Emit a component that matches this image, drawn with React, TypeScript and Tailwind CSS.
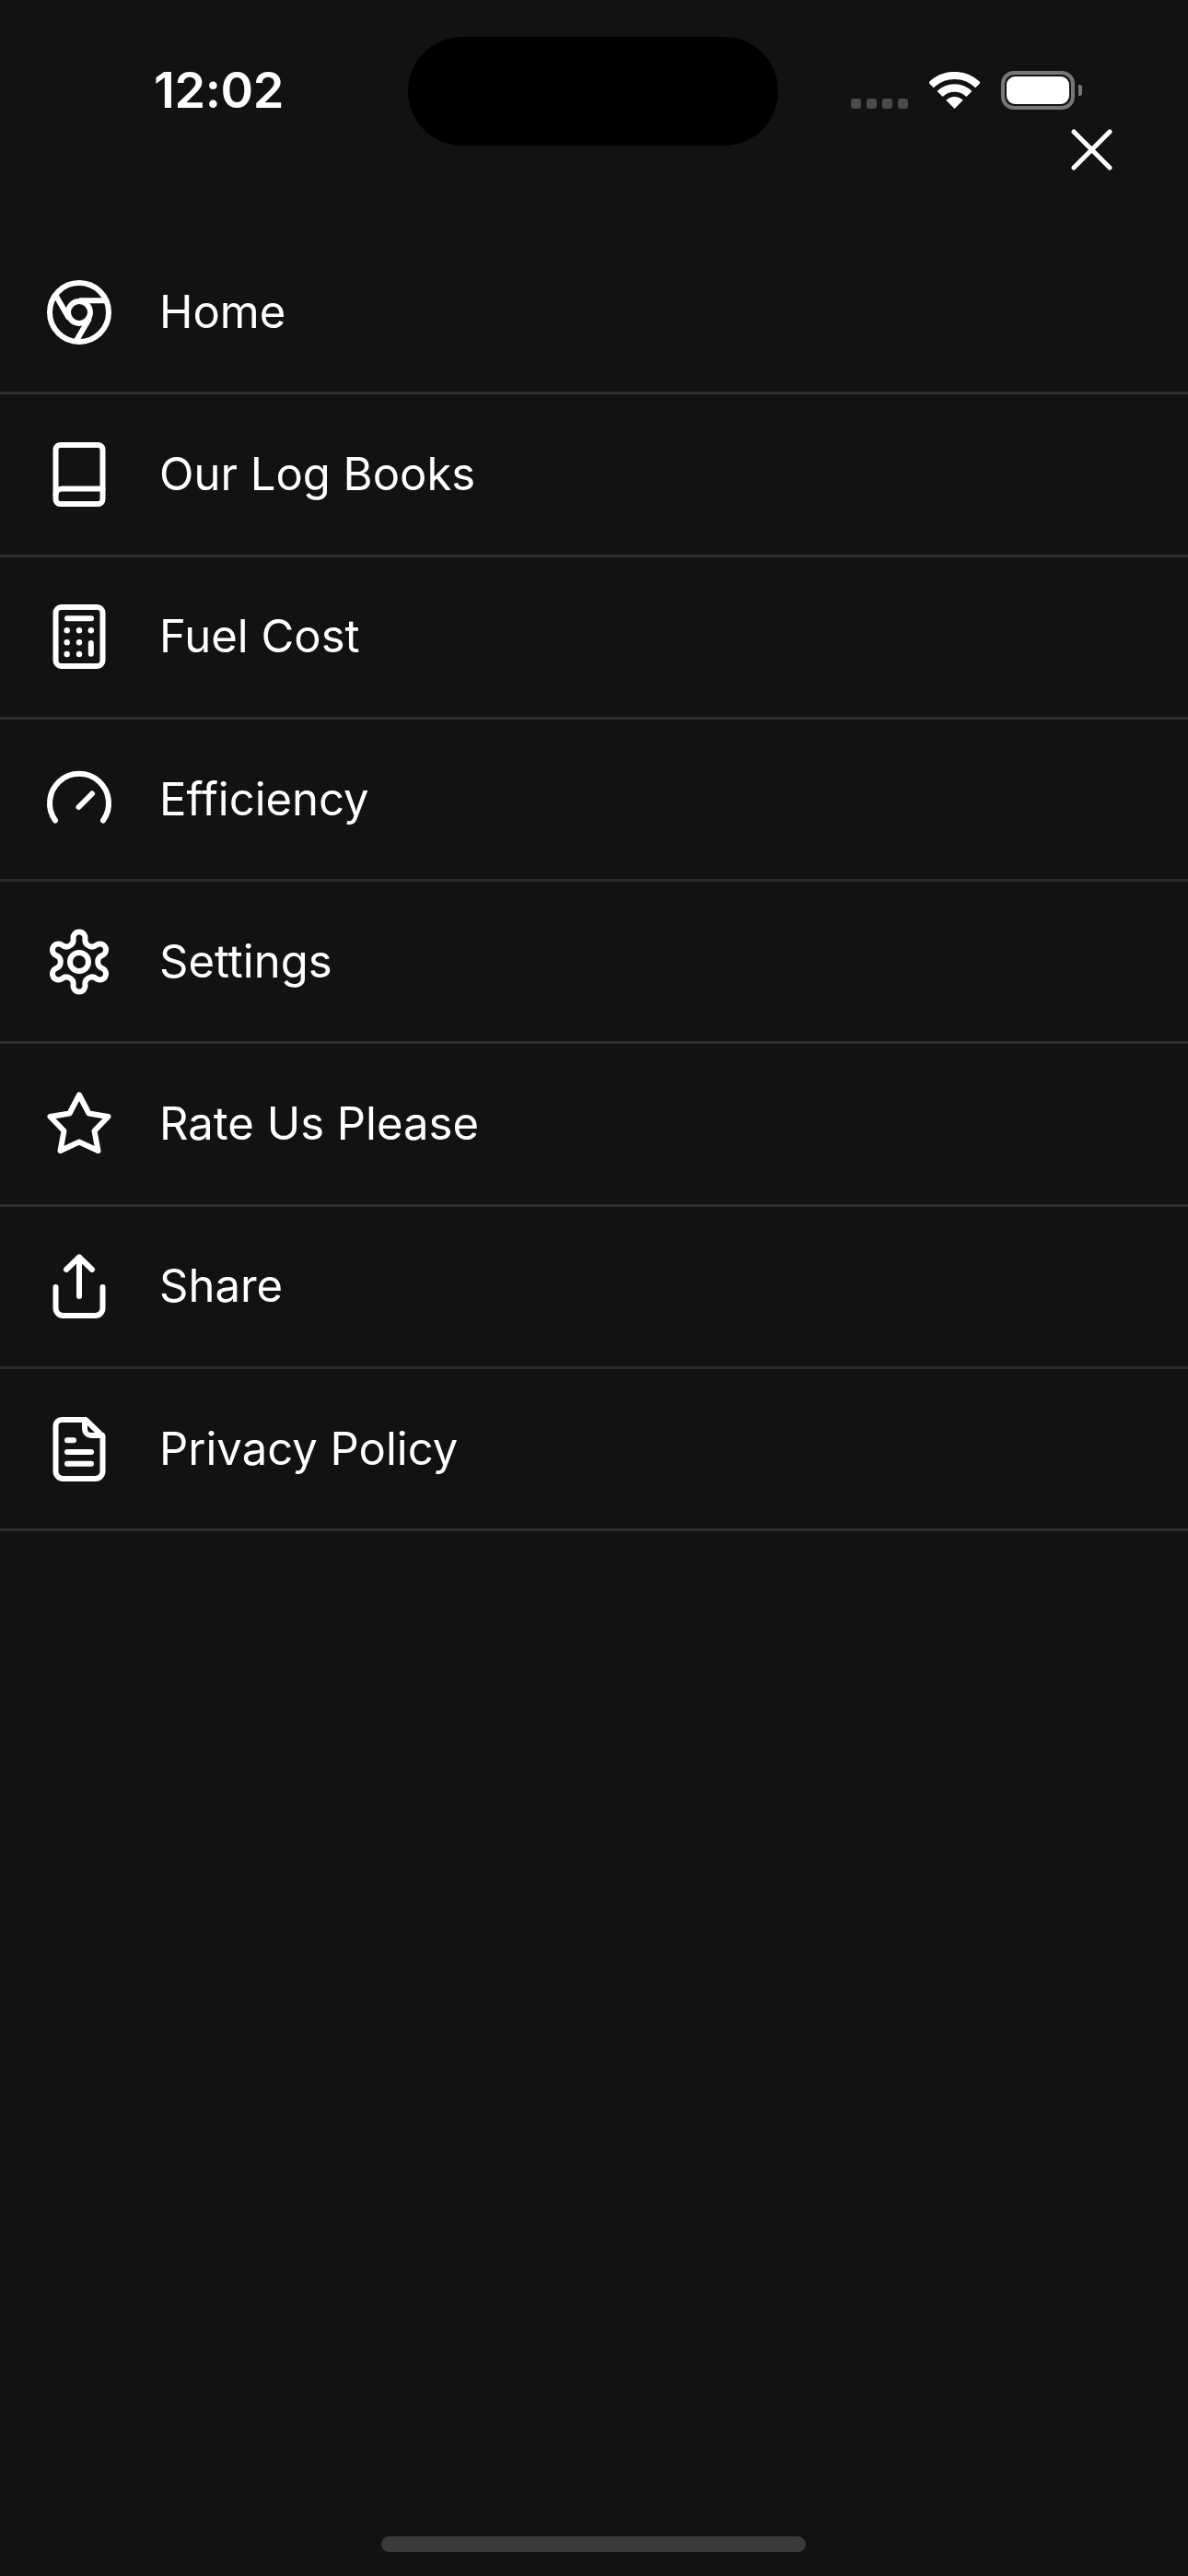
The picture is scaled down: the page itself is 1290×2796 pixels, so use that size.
import type { ReactNode } from "react"

// gear outline in a 70 box: round lobes joined by round notches
const gearPath = () => {
  const lobeDist = 26
  const lobeR = 6.5
  const notchDist = 27.7
  const notchR = 7.5
  const at = (deg: number, dist: number) => {
    const a = (deg * Math.PI) / 180
    return [35 + dist * Math.sin(a), 35 - dist * Math.cos(a)]
  }
  const touch = (lobeDeg: number, notchDeg: number) => {
    const [lx, ly] = at(lobeDeg, lobeDist)
    const [nx, ny] = at(notchDeg, notchDist)
    const t = lobeR / (lobeR + notchR)
    return `${(lx + (nx - lx) * t).toFixed(2)} ${(ly + (ny - ly) * t).toFixed(2)}`
  }
  let d = `M${touch(0, -30)}`
  for (let k = 0; k < 6; k++) {
    const deg = k * 60
    d += `A${lobeR} ${lobeR} 0 1 1 ${touch(deg, deg + 30)}`
    d += `A${notchR} ${notchR} 0 0 0 ${touch(deg + 60, deg + 30)}`
  }
  return `${d}Z`
}

function Icon({ children }: { children: ReactNode }) {
  return (
    <svg
      viewBox="0 0 70 70"
      fill="none"
      stroke="white"
      strokeWidth={6}
      strokeLinecap="round"
      strokeLinejoin="round"
      className="w-[70px] h-[70px] shrink-0 overflow-visible"
    >
      {children}
    </svg>
  )
}

const items: { label: string; icon: ReactNode }[] = [
  {
    label: "Home",
    icon: (
      <>
        <circle cx="35" cy="35" r="32" />
        <circle cx="35" cy="35" r="12" />
        <path d="M64.3 22.2H35M9.2 16L23.9 41.4M31.4 66.8L46.1 41.4" strokeLinecap="butt" />
      </>
    ),
  },
  {
    label: "Our Log Books",
    icon: (
      <>
        <rect x="9.5" y="3" width="51" height="64" rx="5" />
        <path d="M9.5 57a6.5 6.5 0 0 1 6.5-6.5h44.5" />
      </>
    ),
  },
  {
    label: "Fuel Cost",
    icon: (
      <>
        <rect x="9.5" y="3" width="51" height="64" rx="6" />
        <path d="M22 15.3H48M47.8 42V53.7" />
        <g fill="white" stroke="none">
          <circle cx="21.7" cy="28.3" r="3.2" />
          <circle cx="35" cy="28.3" r="3.2" />
          <circle cx="47.8" cy="28.3" r="3.2" />
          <circle cx="21.7" cy="41.3" r="3.2" />
          <circle cx="35" cy="41.3" r="3.2" />
          <circle cx="21.7" cy="54" r="3.2" />
          <circle cx="35" cy="54" r="3.2" />
        </g>
      </>
    ),
  },
  {
    label: "Efficiency",
    icon: (
      <>
        <path d="M9 57.5A32 32 0 1 1 61 57.5" />
        <path d="M34.5 43L49 28.5" />
      </>
    ),
  },
  {
    label: "Settings",
    icon: (
      <>
        <path d={gearPath()} />
        <circle cx="35" cy="35" r="10" />
      </>
    ),
  },
  {
    label: "Rate Us Please",
    icon: <path d="M35 3.5L45.5 23.5L66.5 27L51.5 42.5L55.5 64L35 54.5L14.5 64L18.5 42.5L3.500 27L24.500 23.5Z" />,
  },
  {
    label: "Share",
    icon: (
      <>
        <path d="M9.5 36V59a8 8 0 0 0 8 8H52.500a8 8 0 0 0 8-8V36" />
        <path d="M35 46V3.500M21 17L35 3.500L49 17" />
      </>
    ),
  },
  {
    label: "Privacy Policy",
    icon: (
      <>
        <path d="M16 3H42L60.500 21V59a8 8 0 0 1-8 8H17.500a8 8 0 0 1-8-8V9.500A6.500 6.500 0 0 1 16 3Z" />
        <path d="M41 5V13a7 7 0 0 0 7 7H60M22 25.300H29M22 38H48M22 50.700H48" />
      </>
    ),
  },
]

function StatusIcons() {
  return (
    <div className="flex items-end gap-[23px] pr-[115px]">
      <div className="flex gap-[6px] pb-px">
        <span className="w-[11px] h-[11px] rounded-[3px] bg-[#4a4a4a]" />
        <span className="w-[11px] h-[11px] rounded-[3px] bg-[#4a4a4a]" />
        <span className="w-[11px] h-[11px] rounded-[3px] bg-[#4a4a4a]" />
        <span className="w-[11px] h-[11px] rounded-[3px] bg-[#4a4a4a]" />
      </div>
      <svg viewBox="0 0 55 40" fill="none" stroke="white" className="w-[55px] h-[40px] mb-px">
        <path d="M2 14.500A36 36 0 0 1 53 14.500" strokeWidth={8} />
        <path d="M11.600 24.100A22.500 22.500 0 0 1 43.400 24.100" strokeWidth={8.5} />
        <path d="M27.500 40L18.300 30.800A13 13 0 0 1 36.700 30.800Z" fill="white" stroke="none" />
      </svg>
      <div className="flex items-center gap-[4px]">
        <div className="w-[80px] h-[42px] rounded-[14px] border-[4px] border-[#777777] p-[2px]">
          <div className="w-full h-full rounded-[9px] bg-white" />
        </div>
        <div className="w-[4px] h-[12px] rounded-r-[3px] bg-[#777777]" />
      </div>
    </div>
  )
}

export default function App() {
  return (
    <div className="relative flex flex-col min-h-[2796px] bg-[#121212] text-white font-['Inter',sans-serif]">
      {/* Dynamic island */}
      <div className="absolute top-[40px] left-[443px] w-[402px] h-[118px] rounded-[59px] bg-black" />

      <header className="h-[252px] pt-[77px]">
        <div className="flex items-end justify-between h-[42px]">
          <span className="pl-[167px] text-[54px] leading-[42px] font-semibold tracking-[-0.4px]">12:02</span>
          <StatusIcons />
        </div>
        <div className="flex justify-end pt-[21px] pr-[82px]">
          <svg viewBox="0 0 45 45" stroke="white" strokeWidth={5} strokeLinecap="round" className="w-[45px] h-[45px]">
            <path d="M3 3L42 42M42 3L3 42" />
          </svg>
        </div>
      </header>

      <nav className="flex-1">
        {items.map((item) => (
          <div key={item.label} className="flex items-center gap-[52px] h-[176.3px] pl-[51px] border-b-[3px] border-[#2e2e2e]">
            <Icon>{item.icon}</Icon>
            <span className="text-[49px] leading-[58px] font-normal">{item.label}</span>
          </div>
        ))}
      </nav>

      <div className="ml-[414px] mb-[26px] w-[461px] h-[17px] rounded-full bg-[#3a3a3a]" />
    </div>
  )
}
